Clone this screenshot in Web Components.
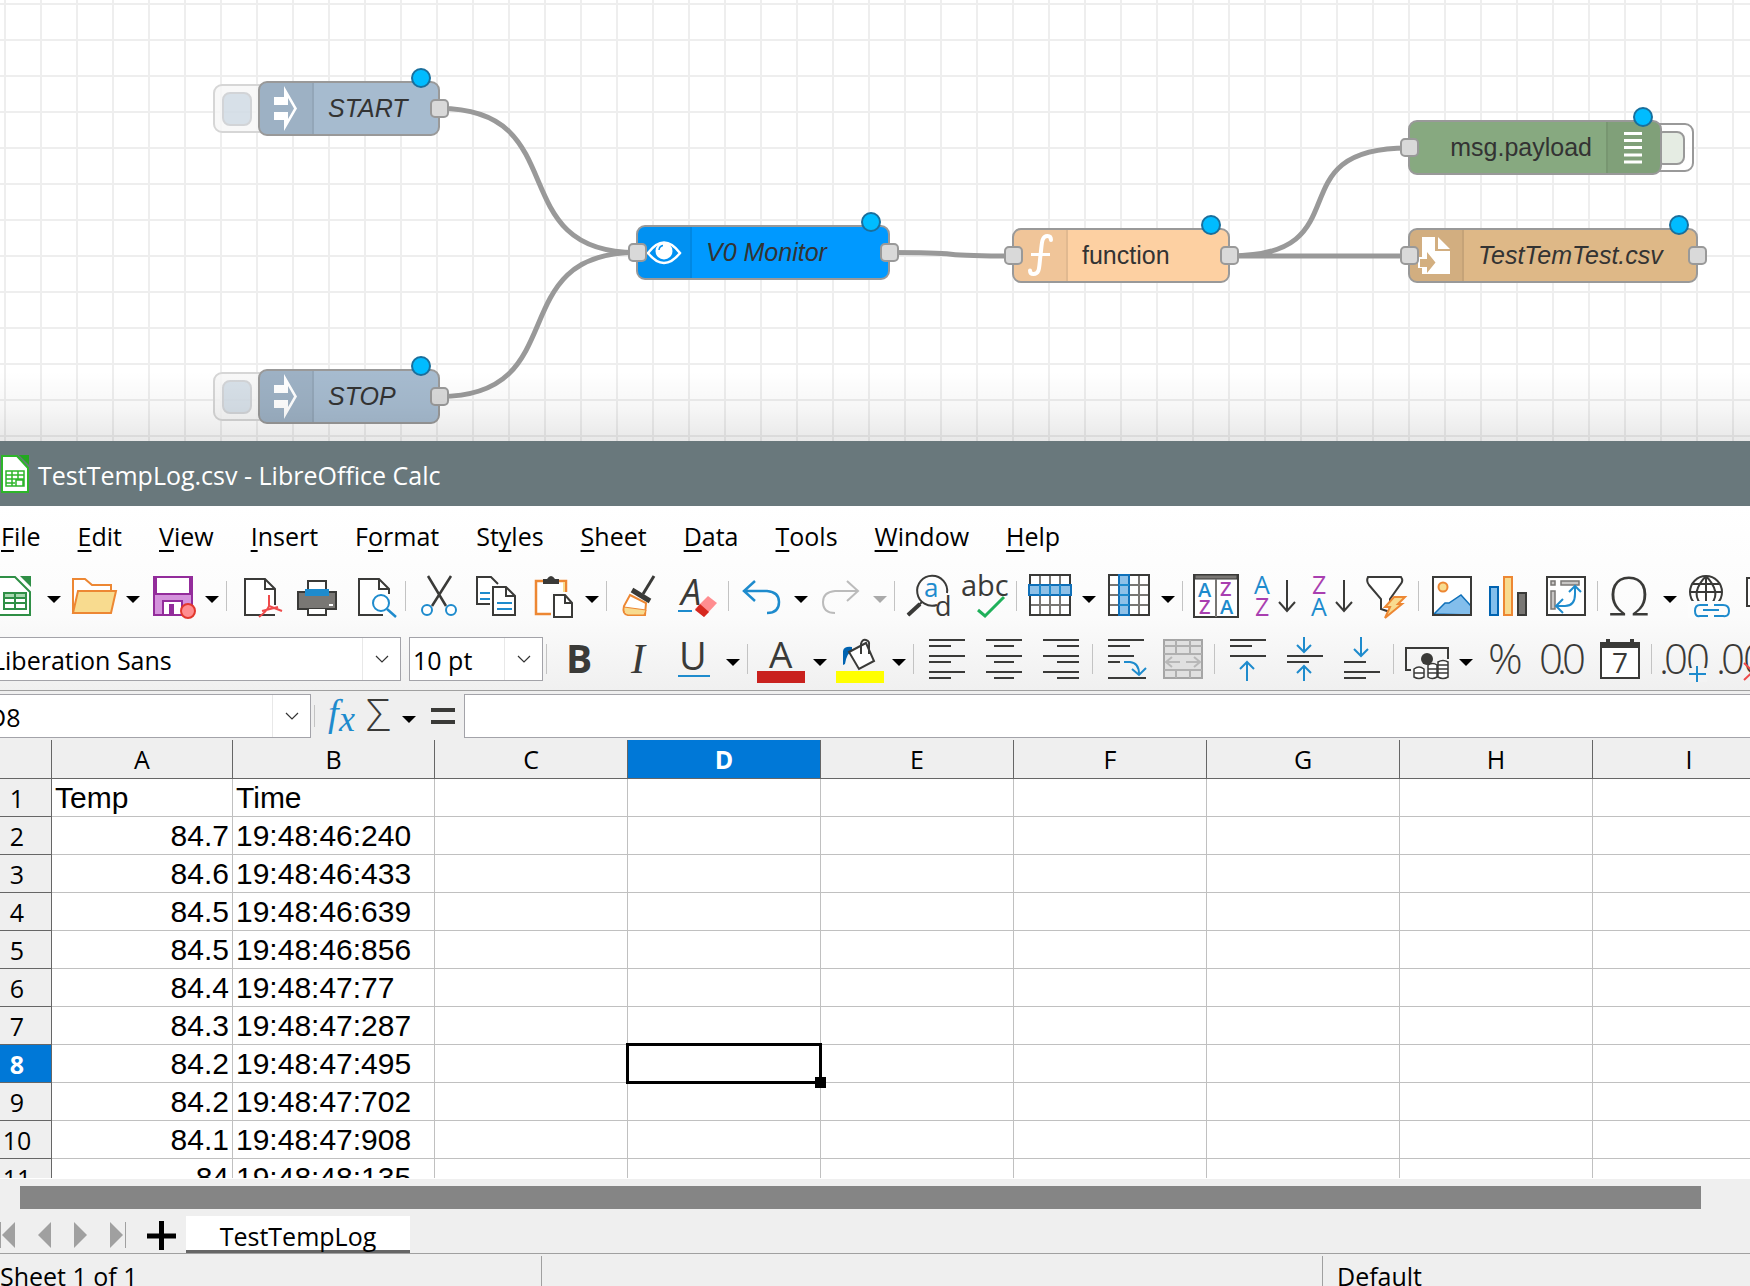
<!DOCTYPE html>
<html lang="en">
<head>
<meta charset="utf-8">
<title>TestTempLog.csv - LibreOffice Calc</title>
<style>
  html, body { margin: 0; height: 100%; }
  body { display: flex; flex-direction: column; overflow: hidden; background: #fff; --ui: "Open Sans", "Noto Sans", sans-serif; font-family: var(--ui); color: #000; }
  flow-canvas { flex: none; }
  calc-window { flex: 1; min-height: 0; }
</style>
</head>
<body>
<flow-canvas>
  <flow-node style="left:258px;top:81px;width:182px" color="#a6bbcf" icon="inject" button="left" output italic>START</flow-node>
  <flow-node style="left:258px;top:369px;width:182px" color="#a6bbcf" icon="inject" button="left" output italic>STOP</flow-node>
  <flow-node style="left:636px;top:225px;width:254px" color="#0099ff" icon="eye" input output italic>V0 Monitor</flow-node>
  <flow-node style="left:1012px;top:228px;width:218px" color="#fdd0a2" icon="func" input output>function</flow-node>
  <flow-node style="left:1408px;top:120px;width:254px" color="#87a980" icon="debug" button="right" input>msg.payload</flow-node>
  <flow-node style="left:1408px;top:228px;width:290px" color="#deb887" icon="file" input output italic>TestTemTest.csv</flow-node>
</flow-canvas>
<calc-window></calc-window>

<script>
const define = (name, html, setup) => {
  const t = document.createElement('template');
  t.innerHTML = html;
  customElements.define(name, class extends HTMLElement {
    connectedCallback() {
      if (this.shadowRoot) return;
      const root = this.attachShadow({ mode: 'open' });
      root.append(t.content.cloneNode(true));
      if (setup) setup(this, root);
    }
  });
};

/* ---------- flow editor ---------- */
const nodeIcons = {
  inject: '<path fill="#fff" d="M15 15H25V4L38 26.500 25 49V38H15V30H29V37L35 26.500 29 16V23H15Z"/>',
  eye: '<path fill="none" stroke="#fff" stroke-width="2.500" d="M11 27Q27 6 43 27Q27 47 11 27Z"/><circle cx="27" cy="25" r="8.500" fill="#fff"/><path d="M22 24Q22.500 20 26 19.500" fill="none" stroke="#0091f2" stroke-width="1.500"/>',
  func: '<path fill="none" stroke="#fff" stroke-width="4" stroke-linecap="round" d="M38 11Q38 7 34.500 7C28 7 29 16 27.500 26C26 38 27 45 20.500 45Q17 45 17 41.500"/><path stroke="#fff" stroke-width="3" d="M18 25.500H37"/>',
  debug: '<path stroke="#fff" stroke-width="3" d="M18 12.500h18M18 19.500h18M18 26.500h18M18 34h18M18 41h18"/>',
  file: '<path fill="#fff" d="M13 8H26V22H41V45H13V39H9V28H13ZM29 8L41 20H29Z"/><path fill="#d3af80" d="M11 30H18V23L26.500 33.500 18 44V38H11Z"/>'
};
define('flow-node', `
<style>
  :host { position: absolute; display: block; height: 55px; box-sizing: border-box; font: 25px/53px "Liberation Sans", Arial, sans-serif; color: #333; }
  .body { position: relative; box-sizing: border-box; height: 55px; display: flex; border: 2px solid #999; border-radius: 9px; background: var(--c); overflow: hidden; line-height: 51px; }
  .icon { flex: none; width: 54px; height: 51px; box-sizing: border-box; background: rgba(0,0,0,.05); border-right: 2px solid rgba(0,0,0,.06); }
  .icon svg { display: block; margin: -1px 0 0 -1px; }
  .label { flex: 1; padding: 0 14px; white-space: nowrap; }
  :host([italic]) .label { font-style: italic; }
  :host([button=right]) .body { flex-direction: row-reverse; }
  :host([button=right]) .label { text-align: right; }
  :host([button=right]) .icon { border-right: 0; border-left: 2px solid rgba(0,0,0,.06); }
  :host([button=right]) .icon svg { margin-left: -2px; }
  .port, .dot, .btn { position: absolute; box-sizing: border-box; padding: 0; }
  .port { display: none; width: 19px; height: 19px; top: 18px; border: 2px solid #999; border-radius: 5px; background: #d9d9d9; }
  .in { left: -8px; } .out { right: -9px; }
  :host([input]) .in, :host([output]) .out { display: block; }
  .dot { width: 20px; height: 20px; right: 9px; top: -13px; border-radius: 50%; background: #00bcff; border: 2px solid #1a6f9c; }
  .btn { display: none; top: 3px; width: 56px; height: 49px; border: 2px solid #999; border-radius: 9px; background: rgba(255,255,255,.8); }
  .btn i { position: absolute; box-sizing: border-box; top: 6px; width: 30px; height: 34px; border: 2px solid #999; border-radius: 8px; background: color-mix(in srgb, var(--c) 22%, white); }
  :host([button=left]) .btn { display: block; left: -45px; border-color: #d6d6d6; background: rgba(246,246,246,.8); }
  :host([button=left]) i { left: 7px; border-color: #d2d4d7; background: color-mix(in srgb, var(--c) 40%, transparent); }
  :host([button=right]) .btn { display: block; right: -32px; }
  :host([button=right]) i { right: 7px; }
</style>
<button class="btn" aria-label="Trigger"><i></i></button>
<div class="body"><div class="icon"></div><div class="label"><slot></slot></div></div>
<span class="port in"></span><span class="port out"></span><span class="dot"></span>`,
(el, root) => {
  el.style.setProperty('--c', el.getAttribute('color'));
  root.querySelector('.icon').innerHTML = `<svg width="54" height="54" viewBox="0 0 54 54">${nodeIcons[el.getAttribute('icon')]}</svg>`;
});

define('flow-canvas', `
<style>
  :host { display: block; position: relative; height: 441px; overflow: hidden;
    background: linear-gradient(#eee 2px, transparent 2px) 0 3px / 36px 36px, linear-gradient(90deg, #eee 2px, transparent 2px) 4px 0 / 36px 36px, #fff; }
  svg { position: absolute; left: 0; top: 0; width: 100%; height: 100%; }
  .shade { position: absolute; left: 0; right: 0; bottom: 0; height: 70px; background: linear-gradient(transparent, rgba(0,0,0,.03) 50%, rgba(0,0,0,.09)); pointer-events: none; }
</style>
<svg fill="none" stroke="#999" stroke-width="5">
  <path d="M440 108.500C575 108.500 501 252.500 636 252.500M440 396.500C575 396.500 501 252.500 636 252.500M890 252.500C982 252.500 920 256 1012 256M1230 256C1365 256 1273 148 1408 148M1230 256H1408"/>
</svg>
<slot></slot>
<div class="shade"></div>`);

/* ---------- toolbar icons, 48 x 48 ---------- */
const K = '#3a3a38', B = '#1e8bcd';
const ln = (d, c = K, w = 2) => `<path d="${d}" fill="none" stroke="${c}" stroke-width="${w}"/>`;
const tx = (x, y, s, size, c = K, extra = '') => `<text x="${x}" y="${y}" font-size="${size}" fill="${c}" ${extra}>${s}</text>`;
const grid = hl => `<path d="M4 3H44V43H4Z" fill="#fff"/>` + ln('M14 3V43M24 3V43M34 3V43M4 13H44M4 23H44M4 33H44', '#797774') + ln('M4 3H44V43H4Z') + hl;
const down = x => ln(`M${x} 8V38M${x - 8} 30L${x} 39L${x + 8} 30`);
const icons = {
  new: '<path d="M-8 5H28L39 16V43H-8Z" fill="#fff"/>' + ln('M-8 5H24L39 20V43H-8', '#2f8f46', 2) + '<path d="M29 4H40V15Z" fill="#2f8f46"/><path d="M12 20H36V26H12Z" fill="#a9d8b0"/>' + ln('M13 21H35V37H13ZM13 26H35M13 31H35M24 21V37', '#2f8f46'),
  open: '<path d="M3 41V7H15L22 13H41V19" fill="#fff" stroke="#ed8733" stroke-width="2"/><path d="M8 19H46L41 41H3Z" fill="#f8db8f" stroke="#ed8733" stroke-width="2"/>',
  save: '<path d="M5 5H43V43H5Z" fill="#d492dc" stroke="#932c9b" stroke-width="2"/><path d="M7 5H41V22H7Z" fill="#fff" stroke="#932c9b" stroke-width="2"/><path d="M14 29H33V43H14Z" fill="#fff" stroke="#932c9b" stroke-width="2"/><path d="M20 32h5v10h-5z" fill="#932c9b"/><circle cx="39" cy="39" r="7" fill="#ff8d90" stroke="#e2382d" stroke-width="2"/>',
  pdf: '<path d="M29 7H9V43H39V17Z" fill="#fff"/>' + ln('M39 33V17L29 7H9V43H39M29 7V17H39') + ln('M33 23V34L46 39M33 34Q31 39 23 45M26 39L42 35', '#ef4b4b'),
  print: '<path d="M5 20H43V37H5Z" fill="#797774" stroke="#3a3a38" stroke-width="2"/><path d="M12 17H36V24H12Z" fill="#1e8bcd"/><path d="M15 17V9H33V17M15 37V43H33V37" fill="#fff" stroke="#3a3a38" stroke-width="2"/><path d="M36 32h4v2h-4z" fill="#fff"/>',
  preview: '<path d="M29 7H9V43H39V17Z" fill="#fff"/>' + ln('M39 22V17L29 7H9V43H33M29 7V17H39') + '<circle cx="31" cy="31" r="8" fill="#fff" stroke="#1e8bcd" stroke-width="2"/>' + ln('M37 37L46 45', B, 2.5),
  cut: ln('M13 4L31 34M36 4L17 34', K, 2.5) + '<g fill="#fff" stroke="#1e8bcd" stroke-width="2"><circle cx="12" cy="38" r="5"/><circle cx="36" cy="38" r="5"/></g>',
  copy: '<path d="M18 32H5V5H19L26 12" fill="#fff" stroke="#3a3a38" stroke-width="2"/>' + ln('M8 21H18M8 27H18', B) + '<path d="M34 15H21V43H43V24Z" fill="#fff" stroke="#3a3a38" stroke-width="2"/>' + ln('M34 15V24H43') + ln('M25 31H40M25 37H40', B),
  paste: '<path d="M7 9H37V42H7Z" fill="#fff" stroke="#ed8733" stroke-width="2.500"/>' + ln('M35 10V21', '#f8db8f') + '<path d="M14 7H18Q22 1 26 7H30V12H14Z" fill="#3a3a38"/><path d="M22 20H46V47H22Z" fill="#fcfcfc"/><path d="M36 23H25V45H43V31Z" fill="#fff" stroke="#3a3a38" stroke-width="2"/>' + ln('M36 23V31H43'),
  brush: ln('M38 4L27 22', K, 3) + ln('M16 18L34 29', K, 5) + '<path d="M14 23L30 31L29 43H12Q6 42 8 34Z" fill="#fff" stroke="#ed8733" stroke-width="2"/><path d="M8 35L30 38L28 43H12Q7 42 8 35Z" fill="#f8db8f" stroke="#ed8733"/>',
  clear: tx(8, 33, 'A', 36, K, 'font-style="italic"') + ln('M5 39H19', B) + '<path d="M35 24L44 31L31 45L22 37Z" fill="#ff8d90"/><path d="M27 32L36 40L31 45L22 38Z" fill="#d6281f"/>',
  undo: ln('M17 9L6 19L17 29M6 19H29Q41 20 41 30Q41 41 29 41', B, 2.5),
  redo: ln('M30 9L41 19L30 29M41 19H18Q6 20 6 30Q6 41 18 41', '#bbb', 2),
  find: ln('M43 21A15 15 0 1 0 33 33M18 30L4 43', K, 2) + ln('M16 32L4 43', K, 4) + tx(20, 25, 'a', 26, B) + tx(31, 44, 'd', 27),
  spell: tx(0, 24, 'abc', 29, K, 'font-weight="400"') + ln('M17 38L24 44L43 25', '#1fb05a', 3),
  row: grid('<path d="M3 13H45V23H3Z" fill="#8fc1e8" stroke="#0f70b9" stroke-width="2"/>' + ln('M14 13V23M24 13V23M34 13V23', B)),
  col: grid('<path d="M14 3H24V43H14Z" fill="#8fc1e8" stroke="#0f70b9" stroke-width="2"/>' + ln('M14 13H24M14 23H24M14 33H24', B)),
  sort: '<path d="M2 3H46V45H2Z" fill="#fff" stroke="#3a3a38" stroke-width="2"/><path d="M3 3H45V7H3Z" fill="#797774" stroke="#3a3a38"/>' + ln('M24 7V45', '#797774') + '<g font-weight="600">' + tx(6, 25, 'A', 20, B) + tx(28, 24, 'Z', 20, '#a93fb0') + tx(7, 42, 'Z', 20, '#a93fb0') + tx(28, 42, 'A', 20, B) + '</g>',
  az: tx(5, 22, 'A', 25, B) + tx(6, 44, 'Z', 25, '#a93fb0') + down(38),
  za: tx(6, 22, 'Z', 25, '#a93fb0') + tx(5, 44, 'A', 25, B) + down(38),
  filter: '<path d="M5 5H38Q41 9 37 13L27 27V40L18 37V27L6 13Q3 9 5 5Z" fill="#fff" stroke="#3a3a38" stroke-width="2"/><path d="M31 25H42L35 32H39L22 46L27 35H22Z" fill="#f8db8f" stroke="#ed8733" stroke-width="2"/>',
  image: '<path d="M5 5H43V43H5Z" fill="#fff"/><path d="M6 42L17 31H21L33 23L43 34V43Z" fill="#83beec" stroke="#0f70b9" stroke-width="1.500"/><circle cx="15" cy="15" r="4.500" fill="#f8db8f" stroke="#ed8733" stroke-width="2"/>' + ln('M5 5H43V43H5Z'),
  chart: '<path d="M5 15H13V43H5Z" fill="#83beec" stroke="#0063b1" stroke-width="2"/><path d="M19 5H27V43H19Z" fill="#f8db8f" stroke="#ed8733" stroke-width="2"/><path d="M33 21H41V43H33Z" fill="#797774" stroke="#3a3a38" stroke-width="2"/>',
  pivot: '<path d="M5 5H43V43H5Z" fill="#fff" stroke="#3a3a38" stroke-width="2"/><g fill="#c8c6c4" stroke="#797774" stroke-width="1.500"><path d="M9 9h4v4h-4zM19 9h18v4h-18zM9 19h4v18h-4z"/></g>' + ln('M33 14V22Q33 34 23 34H15M27 20L33 14L39 20M21 27L14 34L21 41', B),
  omega: tx(1, 43, 'Ω', 54, K, 'font-weight="300"'),
  globe: '<circle cx="20" cy="20" r="16" fill="#fff" stroke="#3a3a38" stroke-width="2"/>' + ln('M4 20H36M7 12H33M20 4V31M20 4Q5 20 14 31M20 4Q35 20 26 31') + '<path d="M2 29H42V46H2Z" fill="#fcfcfc"/>' + ln('M22 33H14Q9 33 9 39T14 44H22M28 33H37Q43 33 43 39T37 44H28M17 38H33', B),
  note: '<path d="M4 6H44V34H4Z" fill="#fff" stroke="#3a3a38" stroke-width="2"/>',
  bold: tx(10, 38, 'B', 39, K, 'font-weight="700"'),
  italic: `<text x="18" y="38" font-size="42" fill="${K}" font-family="Liberation Serif" font-style="italic">I</text>`,
  under: tx(9, 35, 'U', 38) + ln('M8 41H40', B),
  color: tx(12, 33, 'A', 37, K) + '<path d="M0 36H48V48H0Z" fill="#c9211e"/>',
  bucket: '<path d="M7 30V16Q8 11 16 12V17Q11 17 9 29Z" fill="#0063b1"/><path d="M13 17L30 8L38 26L23 34Z" fill="#fff" stroke="#3a3a38" stroke-width="2"/>' + ln('M25 19V9Q26 4 30 5Q34 6 33 11V19') + '<path d="M0 36H48V48H0Z" fill="#ff0"/>',
  left: ln('M6 5H42M6 11H28M6 21H42M6 27H28M6 37H42M6 43H28'),
  center: ln('M6 5H42M14 11H34M6 21H42M14 27H34M6 37H42M14 43H34'),
  right: ln('M6 5H42M20 11H42M6 21H42M20 27H42M6 37H42M20 43H42'),
  wrap: ln('M6 5H42M6 11H28M6 21H32M6 27H18M6 43H44') + ln('M22 27H28Q37 28 37 39M30 34L37 40L44 33', B),
  merge: '<path d="M5 5H43V43H5Z" fill="#e0e0e0" stroke="#a5a5a5" stroke-width="2"/>' + ln('M5 11H43M5 19H43M5 35H43M17 5V19M31 5V19M17 35V43M31 35V43', '#b0b0b0') + ln('M7 27H21M27 27H41M13 22L7 27L13 32M35 22L41 27L35 32', '#b8b8b8'),
  vtop: ln('M6 5H42M6 11H28M6 21H42') + ln('M23 46V27M16 34L23 27L30 34', B),
  vmid: ln('M6 21H42M6 27H28') + ln('M23 2V17M16 10L23 17L30 10M23 46V31M16 38L23 31L30 38', B),
  vbot: ln('M6 27H28M6 37H42M6 43H28') + ln('M23 2V21M16 14L23 21L30 14', B),
  money: '<path d="M8 35H3V13H45V24" fill="none" stroke="#3a3a38" stroke-width="2"/><circle cx="24" cy="24" r="6" fill="#3a3a38"/><g fill="#fff" stroke="#3a3a38" stroke-width="1.500"><path d="M11 34Q16 30 21 34V42Q16 45 11 42ZM25 30Q30 27 34 30V42Q29 45 25 42ZM35 27Q40 24 45 27V42Q40 45 35 42Z"/></g>' + ln('M11 38H21M25 34H45M25 38H45M35 30H45', K, 1.5),
  percent: tx(6, 39, '%', 43, K, 'font-weight="300"'),
  number: tx('0 18 23', 39, '0.0', 42, K, 'font-weight="300"'),
  date: '<path d="M5 8H43V43H5Z" fill="#fff" stroke="#3a3a38" stroke-width="2"/><path d="M4 8H44V13H4ZM10 4H14V9H10ZM34 4H38V9H34Z" fill="#3a3a38"/>' + tx(16, 38, '7', 28, K),
  addDec: tx('-2 3 25', 39, '.00', 42, K, 'font-weight="300"') + '<path d="M27 33H46V47H27Z" fill="#f3f3f3"/>' + ln('M36 31V47M28 39H45', B),
  delDec: tx('-2 3 25', 39, '.00', 42, K, 'font-weight="300"') + ln('M26 28L44 45M44 28L26 45', '#ef4b4b'),
  fx: '<g fill="#1e8bcd" font-family="Liberation Serif" font-style="italic"><text x="12" y="34" font-size="38">f</text><text x="23" y="39" font-size="36">x</text></g>',
  sum: tx(11, 39, 'Σ', 44, K, 'font-weight="300"'),
  equal: ln('M12 18H36M12 30H36', K, 4)
};
const arrow = '<svg width="14" height="8" viewBox="0 0 14 8"><path d="M0 0H14L7 7Z" fill="currentColor"/></svg>';

define('tool-button', `
<style>
  :host { flex: none; display: flex; height: 48px; }
  :host([off]) { color: #aaa; }
  button { flex: none; border: 0; padding: 0; margin: 0; background: none; color: inherit; display: flex; justify-content: center; align-items: center; }
  .main { width: var(--cell, 57px); } .more { display: none; width: 22px; padding-top: 8px; }
  :host([menu]) .more { display: flex; }
  svg { display: block; flex: none; overflow: visible; font-family: "Open Sans", sans-serif; }
</style>
<button class="main"></button><button class="more" aria-label="More">${arrow}</button>`,
(el, root) => {
  const n = el.getAttribute('icon'), b = root.querySelector('.main');
  b.setAttribute('aria-label', n);
  b.innerHTML = `<svg width="48" height="48" viewBox="0 0 48 48">${icons[n]}</svg>`;
});

define('tool-bar', `
<style>
  :host { display: flex; height: 48px; align-items: center; white-space: nowrap; }
  .sep { flex: none; width: 1px; height: 30px; margin: 0 4px 0 3px; background: #c3c3c3; }
  .items { display: contents; }
</style><slot></slot><div class="items"></div>`,
(el, root) => {
  root.querySelector('.items').innerHTML = (el.getAttribute('items') || '').split(' ').map(i => i === '|' ? '<span class="sep"></span>'
    : `<tool-button icon="${i.replace(/[+-]/g, '')}" ${/[+-]/.test(i) ? 'menu' : ''} ${i.includes('-') ? 'off' : ''}></tool-button>`).join('');
});

define('combo-box', `
<style>
  :host { flex: none; display: block; position: relative; height: 44px; box-sizing: border-box; border: 1px solid #a3a3a9; background: #fff; }
  select { appearance: none; display: block; width: 100%; height: 100%; box-sizing: border-box; border: 0; margin: 0; padding: 1px 40px 0 3px; background: none; font: 25px/42px var(--ui); color: #000; }
  span { position: absolute; right: 0; top: 0; bottom: 0; width: 37px; border-left: 1px solid #e8e8e8; display: flex; align-items: center; justify-content: center; pointer-events: none; }
</style>
<select><option></option></select>
<span><svg width="14" height="8" viewBox="0 0 14 8"><path d="M1 1L7 7L13 1" fill="none" stroke="#333" stroke-width="1.200"/></svg></span>`,
(el, root) => {
  root.querySelector('option').textContent = el.getAttribute('value');
  root.querySelector('select').setAttribute('aria-label', el.getAttribute('label'));
});

define('menu-bar', `
<style>
  :host { display: flex; gap: 37px; height: 66px; box-sizing: border-box; padding: 0 0 6px 1px; align-items: center; }
  button { flex: none; border: 0; padding: 0; margin: 0; background: none; font: 25px/34px var(--ui); color: #000; }
  u { text-decoration-thickness: 2px; text-underline-offset: 4px; text-decoration-skip-ink: none; }
</style>`, (el, root) => {
  root.innerHTML += ['_File', '_Edit', '_View', '_Insert', 'F_ormat', 'St_yles', '_Sheet', '_Data', '_Tools', '_Window', '_Help']
    .map(m => `<button>${m.replace(/_(.)/, '<u>$1</u>')}</button>`).join('');
});

define('sheet-grid', `
<style>
  :host { display: block; overflow: hidden; background: #fff; border-bottom: 1px solid #fff; }
  table { table-layout: fixed; width: 1786px; border-collapse: separate; border-spacing: 0; }
  th, td { box-sizing: border-box; padding: 0; height: 38px; white-space: nowrap; border: 0 solid #c0c0c0; border-width: 0 1px 1px 0; }
  th { background: #efefef; border-color: #666; font: 25px/36px var(--ui); }
  thead th { height: 39px; line-height: 38px; }
  tbody th { padding-right: 17px; }
  th.on { background: #0078d7; color: #fff; font-weight: 700; }
  td { font: 30px/36px "Liberation Sans", Arial, sans-serif; padding: 0 3px; }
  td.n { text-align: right; }
  td.cur { position: relative; }
  .sel { position: absolute; inset: -2px; border: 3px solid #000; }
  .sel::after { content: ""; position: absolute; right: -7px; bottom: -7px; width: 11px; height: 11px; background: #000; }
</style>
<table><colgroup><col style="width:52px"><col style="width:181px"><col style="width:202px"></colgroup><thead></thead><tbody></tbody></table>`,
(el, root) => {
  const rows = [['Temp', 'Time'], ['84.7', '19:48:46:240'], ['84.6', '19:48:46:433'], ['84.5', '19:48:46:639'], ['84.5', '19:48:46:856'], ['84.4', '19:48:47:77'],
    ['84.3', '19:48:47:287'], ['84.2', '19:48:47:495'], ['84.2', '19:48:47:702'], ['84.1', '19:48:47:908'], ['84', '19:48:48:135']];
  const cols = [...'ABCDEFGHI'];
  root.querySelector('thead').innerHTML = '<tr><th></th>' + cols.map(c => `<th class="${c === 'D' ? 'on' : ''}">${c}</th>`).join('') + '</tr>';
  root.querySelector('tbody').innerHTML = rows.map((r, i) => `<tr><th class="${i === 7 ? 'on' : ''}">${i + 1}</th>` + cols.map((c, j) =>
    i === 7 && c === 'D' ? '<td class="cur"><div class="sel"></div></td>' : `<td class="${j === 0 && i ? 'n' : ''}">${r[j] || ''}</td>`).join('') + '</tr>').join('');
});

define('sheet-tabs', `
<style>
  :host { display: flex; height: 37px; border-bottom: 1px solid #a0a0a0; align-items: stretch; }
  button { flex: none; border: 0; padding: 0; margin: 0; background: none; width: 36px; text-align: left; }
  .add { width: 42px; }
  .tab { width: 224px; text-align: center; background: #fff; border-bottom: 3px solid #666; padding-top: 3px; font: 25px/34px var(--ui); color: #000; }
  svg { display: block; }
</style>
<button aria-label="First sheet"><svg width="36" height="36"><path d="M15 5V31L2 18Z" fill="#a0a0a0"/><path d="M0 5h1v26h-1z" fill="#a0a0a0"/></svg></button>
<button aria-label="Previous sheet"><svg width="36" height="36"><path d="M15 5V31L2 18Z" fill="#a0a0a0"/></svg></button>
<button aria-label="Next sheet"><svg width="36" height="36"><path d="M2 5V31L15 18Z" fill="#a0a0a0"/></svg></button>
<button aria-label="Last sheet"><svg width="36" height="36"><path d="M2 5V31L15 18Z" fill="#a0a0a0"/><path d="M17 5h1v26h-1z" fill="#a0a0a0"/></svg></button>
<button class="add" aria-label="Add sheet"><svg width="42" height="36"><path d="M3 19H32M17.500 4V33" stroke="#000" stroke-width="5"/></svg></button>
<button class="tab">TestTempLog</button>`);

define('calc-window', `
<style>
  :host { display: flex; flex-direction: column; background: #efefef; overflow: hidden; }
  header { flex: none; height: 65px; display: flex; align-items: center; gap: 9px; background: #69787c; color: #fff; font-size: 25px; line-height: 34px; padding: 0 0 0 1px; white-space: nowrap; }
  header svg { flex: none; }
  header span { padding-top: 3px; }
  .tools { flex: none; background: linear-gradient(#fff, #fbfbfb 60%, #f0f0f0); height: 184px; border-bottom: 1px solid #a0a0a0; }
  .main { margin-left: -14px; }
  .fmt { margin-top: 15px; }
  .font { width: 413px; margin: 0 8px 0 -12px; }
  .size { width: 134px; }
  .formula { flex: none; display: flex; align-items: center; height: 49px; overflow: hidden; --cell: 39px; }
  .name { width: 327px; margin-left: -16px; }
  .sep { width: 1px; height: 22px; background: #c3c3c3; margin: 0 5px 0 3px; }
  .line { flex: 1; min-width: 0; height: 44px; box-sizing: border-box; border: 1px solid #a3a3a9; border-right: 0; background: #fff; margin: 0 0 0 2px; padding: 0 4px; font: 25px var(--ui); }
  .eq { margin-left: 3px; }
  sheet-grid { flex: 1; min-height: 0; }
  .scroll { flex: none; height: 23px; margin: 7px 49px 7px 20px; background: #858585; }
  sheet-tabs { flex: none; }
  footer { flex: none; height: 32px; overflow: hidden; display: flex; font-size: 25px; line-height: 34px; white-space: nowrap; }
  footer div { flex: none; padding: 3px 0 0 14px; margin-top: 2px; border-left: 1px solid #a0a0a0; box-sizing: border-box; }
  footer div:first-child { border: 0; padding-left: 0; width: 541px; }
  footer div:nth-child(2) { flex: 1; }
  footer div:last-child { width: 428px; }
</style>
<header>
  <svg width="28" height="38" viewBox="0 0 28 38"><path d="M1 1H16L27 13V37H1Z" fill="#fff" stroke="#2db52a" stroke-width="2"/><path d="M18 0H28V10Z" fill="#23a81f"/><path d="M5 16H23V31H5ZM5 20H23M5 24H23M5 28H14M11 16V31M17 16V24M15 25H22V31H15Z" fill="none" stroke="#2db52a" stroke-width="1.500"/></svg>
  <span>TestTempLog.csv - LibreOffice Calc</span>
</header>
<div class="tools">
  <menu-bar></menu-bar>
  <tool-bar class="main" items="new+ open+ save+ | pdf print preview | cut copy paste+ | brush clear | undo+ redo- | find spell | row+ col+ | sort az za filter | image chart pivot | omega+ globe note"></tool-bar>
  <tool-bar class="fmt" items="| bold italic under+ | color+ bucket+ | left center right | wrap merge | vtop vmid vbot | money+ percent number date | addDec delDec">
    <combo-box class="font" value="Liberation Sans" label="Font name"></combo-box>
    <combo-box class="size" value="10 pt" label="Font size"></combo-box>
  </tool-bar>
</div>
<div class="formula">
  <combo-box class="name" value="D8" label="Name box"></combo-box>
  <span class="sep"></span>
  <tool-button icon="fx"></tool-button>
  <tool-button icon="sum" menu></tool-button>
  <tool-button class="eq" icon="equal"></tool-button>
  <input class="line" aria-label="Formula">
</div>
<sheet-grid></sheet-grid>
<div class="scroll"></div>
<sheet-tabs></sheet-tabs>
<footer><div>Sheet 1 of 1</div><div></div><div>Default</div></footer>`);
</script>
</body>
</html>
